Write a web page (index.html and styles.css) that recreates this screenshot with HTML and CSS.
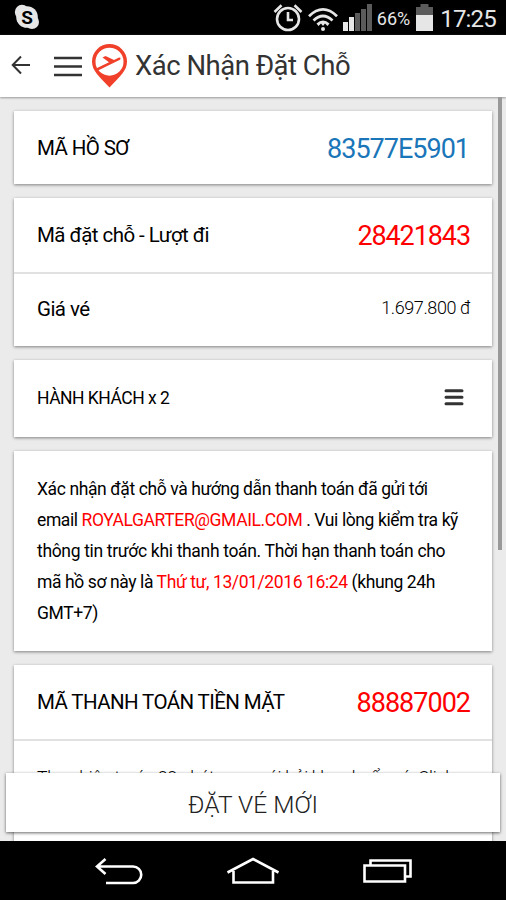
FILE: index.html
```html
<!DOCTYPE html>
<html lang="vi">
<head>
<meta charset="utf-8">
<title>Xác Nhận Đặt Chỗ</title>
<link rel="stylesheet" href="styles.css">
</head>
<body>
<div class="phone">
  <div class="status">
    <svg class="skype" width="26" height="26" viewBox="0 0 26 26"><circle cx="13" cy="13" r="10.8"/><circle cx="8" cy="8" r="7.2"/><circle cx="18" cy="18" r="7"/><text x="13" y="19.7" text-anchor="middle">S</text></svg>
    <div class="tray">
      <svg class="alarm" width="30" height="30" viewBox="0 0 30 30"><circle cx="15" cy="16" r="11"/><path d="M15 9v8h5M1.500 9L8.500 2.200M28.500 9L21.500 2.200"/></svg>
      <svg class="wifi" width="30" height="25" viewBox="0 0 30 25"><path d="M1 9.200Q15 -4.500 29 9.200M5.500 13.500Q15 4.500 24.500 13.500"/><circle cx="15" cy="22" r="2"/><path class="solid" d="M8.500 16.500Q15 10.500 21.500 16.500L19.500 19L17 16.500L15 19L13 16.500L10.500 19Z"/></svg>
      <svg class="signal" width="29" height="28" viewBox="0 0 29 28"><path class="on" d="M0 18h5v9H0zM6 13h5v14H6z"/><path class="off" d="M12 9h5v18h-5zM18 5h5v22h-5zM24 0h5v27h-5z"/></svg>
      <span class="percent">66%</span>
      <svg class="battery" width="17" height="27" viewBox="0 0 17 27"><path class="off" d="M4.500 0h8v3H17v8H0V3h4.500z"/><path class="on" d="M0 11h17v16H0z"/></svg>
      <span class="clock">17:25</span>
    </div>
  </div>
  <header class="bar">
    <svg class="back" width="20" height="20" viewBox="0 0 20 20"><path d="M19 10H2M10 1.500L1.700 10L10 18.500"/></svg>
    <svg class="menu" width="28" height="21" viewBox="0 0 28 21"><path d="M0 2h28M0 10.500h28M0 19h28"/></svg>
    <svg class="pin" width="36" height="44" viewBox="0 0 36 44"><path class="red" fill-rule="evenodd" d="M17.500 0A17.500 17.500 0 0 0 0 17.500C0 27 7 32 17.500 43.500C28 32 35 27 35 17.500A17.500 17.500 0 0 0 17.500 0ZM17.500 3.700A14 14 0 1 1 17.500 31.700A14 14 0 0 1 17.500 3.700Z"/><path class="red" d="M4 24.500L17 18.200L10.500 13.500L13.500 12L22 16L27 13.600Q29.500 13.500 28 15.800L6 26.500Z"/></svg>
    <h1>Xác Nhận Đặt Chỗ</h1>
  </header>
  <main class="content">
    <section class="card"><div class="row r1"><span class="label l1">MÃ HỒ SƠ</span><span class="code blue">83577E5901</span></div></section>
    <section class="card">
      <div class="row r2"><span class="label l2">Mã đặt chỗ - Lượt đi</span><span class="code c2">28421843</span></div>
      <div class="row r3"><span class="label l3">Giá vé</span><span class="price">1.697.800 đ</span></div>
    </section>
    <section class="card"><div class="row r4"><span class="label small">HÀNH KHÁCH x 2</span><svg class="list" width="20" height="17" viewBox="0 0 20 17"><path d="M2 1.700h16M2 8.300h16M2 14.800h16"/></svg></div></section>
    <section class="card notice">
      <p class="n1">Xác nhận đặt chỗ và hướng dẫn thanh toán đã gửi tới</p>
      <p class="n2">email <em>ROYALGARTER@GMAIL.COM</em> . Vui lòng kiểm tra kỹ</p>
      <p class="n3">thông tin trước khi thanh toán. Thời hạn thanh toán cho</p>
      <p class="n4">mã hồ sơ này là <em>Thứ tư, 13/01/2016 16:24</em> (khung 24h</p>
      <p class="n5">GMT+7)</p>
    </section>
    <section class="card">
      <div class="row r5"><span class="label l5">MÃ THANH TOÁN TIỀN MẶT</span><span class="code c5">88887002</span></div>
      <div class="more">Thực hiện trước 22 phút, sau mới hỏi kho chuẩn vé. Click</div>
    </section>
    <i class="scroll"></i>
    <button class="cta">ĐẶT VÉ MỚI</button>
  </main>
  <nav class="nav">
    <svg width="50" height="28" viewBox="0 0 50 28"><path d="M12.500 2L4 9.500L12.500 17M4.500 9.500H40A8 8 0 0 1 40 26H13"/></svg>
    <svg width="54" height="27" viewBox="0 0 54 27"><path d="M1.500 15.500L27 2L52.500 15.500M7.500 14V25.500H47V14"/></svg>
    <svg width="50" height="24" viewBox="0 0 50 24"><path d="M1.500 6.500H42V22.500H1.500zM7.500 6V1.500H47.500V17.500H43"/></svg>
  </nav>
</div>
</body>
</html>
```
FILE: styles.css
```css
* { box-sizing: border-box; }
body { margin: 0; font-family: Roboto, sans-serif; background: #000; color: #000; }
svg { display: block; flex: none; fill: none; }
.phone { width: 506px; height: 900px; display: flex; flex-direction: column; overflow: hidden; }
.status { height: 35px; display: flex; justify-content: space-between; padding: 4px 10px 0 14px; color: #e6e6e6; }
.skype circle { fill: #e6e6e6; }
.skype text { fill: #000; font: 700 19px Roboto, sans-serif; }
.tray { display: flex; align-items: flex-start; }
.alarm { margin-top: -1px; stroke: #e6e6e6; stroke-width: 2.6; }
.wifi { margin: 3px 0 0 5px; stroke: #e6e6e6; stroke-width: 2.7; }
.wifi circle, .wifi .solid { fill: #e6e6e6; stroke: none; }
.signal { margin-left: 5px; }
.on { fill: #e6e6e6; }
.off { fill: #5b5b5b; }
.percent { font-size: 18px; line-height: 29px; margin-left: 5px; }
.battery { margin-left: 6px; }
.clock { font-size: 24px; line-height: 30px; margin-left: 7px; letter-spacing: -.8px; }
.bar { height: 62px; flex: none; background: #fff; display: flex; align-items: center; padding-left: 11px; position: relative; z-index: 2; box-shadow: 0 1px 2px #999; }
.back { stroke: #333; stroke-width: 2; margin-top: -2px; }
.menu { margin-left: 23px; stroke: #333; stroke-width: 2.700; }
.pin { margin-left: 10px; }
.red { fill: #f0402a; }
h1 { margin: -2px 0 0 7px; font-size: 27.500px; font-weight: 400; color: #333; white-space: nowrap; letter-spacing: -.5px; }
.content { position: relative; height: 744px; flex: none; overflow: hidden; background: #ebebeb; padding: 14px 14px 0; display: flex; flex-direction: column; gap: 14px; }
.card { background: #fff; flex: none; box-shadow: 0 1px 3px rgba(0,0,0,.45); }
.row { height: 74px; padding: 0 22px 0 23px; display: flex; align-items: center; justify-content: space-between; white-space: nowrap; }
.r1 { height: 73px; }
.r3 { border-top: 2px solid #e1e1e1; padding-bottom: 2px; }
.r4 { height: 77px; padding-bottom: 2px; }
.label { font-size: 20.500px; letter-spacing: -.6px; }
.l2, .l3 { letter-spacing: -.55px; }
.small { font-size: 17.500px; letter-spacing: -.5px; }
.code { font-size: 27px; letter-spacing: -1px; color: #f00; }
.c2 { letter-spacing: -1.1px; padding-top: 2px; }
.c5 { padding-top: 2px; }
.blue { color: #1a76b8; padding-top: 2px; margin-right: 1px; }
.price { font-size: 18px; font-weight: 300; letter-spacing: -.4px; padding-bottom: 4px; }
.list { stroke: #333; stroke-width: 3; stroke-linecap: round; margin-right: 6px; }
.notice { height: 200px; padding: 23px 23px; }
.notice p { margin: 0; font-size: 17.500px; line-height: 31px; letter-spacing: -.4px; white-space: nowrap; width: max-content; }
.notice .n3 { letter-spacing: -.33px; }
em { color: #f00; font-style: normal; }
.more { height: 140px; border-top: 2px solid #e1e1e1; padding: 22px 23px; font-size: 17.500px; line-height: 31px; font-weight: 300; letter-spacing: -.25px; white-space: nowrap; }
.scroll { position: absolute; right: 4px; top: 0; width: 4px; height: 453px; background: #999; }
.cta { position: absolute; left: 6px; right: 6px; top: 676px; height: 59px; padding: 3px 0 0; border: 0; background: #fff; font: 300 24.500px Roboto, sans-serif; color: #222; box-shadow: 0 1px 3px rgba(0,0,0,.6); }
.nav { flex: 1; background: #000; display: flex; justify-content: center; align-items: center; gap: 83px; }
.nav svg { stroke: #fff; stroke-width: 2.6; }
```
